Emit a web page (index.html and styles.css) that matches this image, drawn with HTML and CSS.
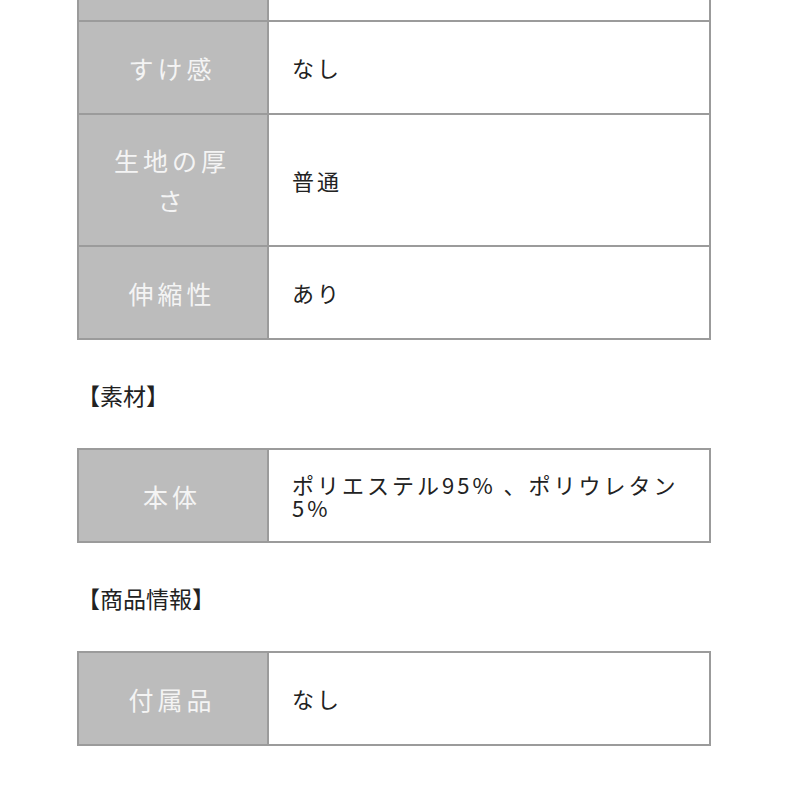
FILE: index.html
```html
<!DOCTYPE html>
<html lang="ja">
<head>
<meta charset="utf-8">
<link rel="stylesheet" href="styles.css">
</head>
<body>
<div class="page">
  <table class="spec">
    <colgroup><col class="col-label"><col class="col-value"></colgroup>
    <tr class="row-top"><th></th><td></td></tr>
    <tr class="row"><th>すけ感</th><td>なし</td></tr>
    <tr class="row-tall"><th>生地の厚さ</th><td>普通</td></tr>
    <tr class="row"><th>伸縮性</th><td>あり</td></tr>
  </table>
  <h2 class="heading">【素材】</h2>
  <table class="spec">
    <colgroup><col class="col-label"><col class="col-value"></colgroup>
    <tr class="row"><th>本体</th><td>ポリエステル95% 、ポリウレタン5%</td></tr>
  </table>
  <h2 class="heading">【商品情報】</h2>
  <table class="spec">
    <colgroup><col class="col-label"><col class="col-value"></colgroup>
    <tr class="row"><th>付属品</th><td>なし</td></tr>
  </table>
</div>
</body>
</html>
```
FILE: styles.css
```css
html, body {
  margin: 0;
  padding: 0;
  background: #ffffff;
}
body {
  font-family: "Noto Sans CJK JP", "Noto Sans", sans-serif;
  color: #222222;
}
.page {
  margin-left: 77px;
  width: 634px;
}
.spec {
  width: 634px;
  border-collapse: collapse;
  table-layout: fixed;
}
.col-label {
  width: 190px;
}
.spec th, .spec td {
  border: 2px solid #9b9b9b;
  padding: 0;
}
.spec th {
  background: #bcbcbc;
  color: #f4f4f4;
  font-weight: normal;
  font-size: 25px;
  letter-spacing: 4px;
  line-height: 40px;
  padding: 0 28px 0 26px;
  text-align: center;
}
.spec td {
  background: #ffffff;
  font-size: 22px;
  letter-spacing: 3px;
  line-height: 23px;
  padding: 0 18px 0 23px;
  text-align: left;
}
.row-top th, .row-top td {
  height: 20px;
  border-top: none;
}
.row th, .row td {
  height: 91px;
}
.row-tall th, .row-tall td {
  height: 130px;
}
.heading {
  margin: 39px 0 36px 0;
  font-size: 23px;
  font-weight: normal;
  line-height: 33px;
  color: #222222;
}
```
